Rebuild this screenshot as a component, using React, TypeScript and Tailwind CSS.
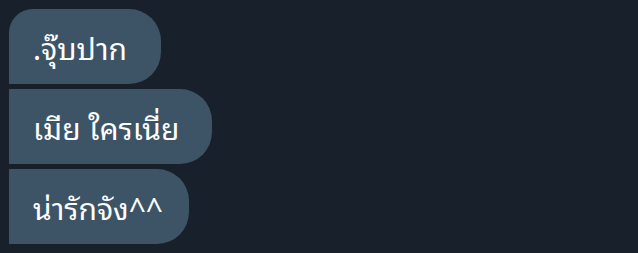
import React from "react";

export default function App() {
  return (
    <div className="w-[638px] h-[253px] bg-[#17202b] pt-[9px] pl-[9px] flex flex-col items-start gap-[5px] font-['Noto_Sans_Thai_Looped','Noto_Sans',sans-serif] text-[30px] text-white">
      <div className="h-[75px] flex items-center pl-[24px] pr-[34px] bg-[#3d5466] rounded-tl-[24px] rounded-r-[32px]">
        .จุ๊บปาก
      </div>
      <div className="h-[75px] flex items-center pl-[24px] pr-[33px] bg-[#3d5466] rounded-r-[32px]">
        เมีย ใครเนี่ย
      </div>
      <div className="h-[75px] flex items-center pl-[24px] pr-[26px] bg-[#3d5466] rounded-r-[32px]">
        น่ารักจัง^^
      </div>
    </div>
  );
}
